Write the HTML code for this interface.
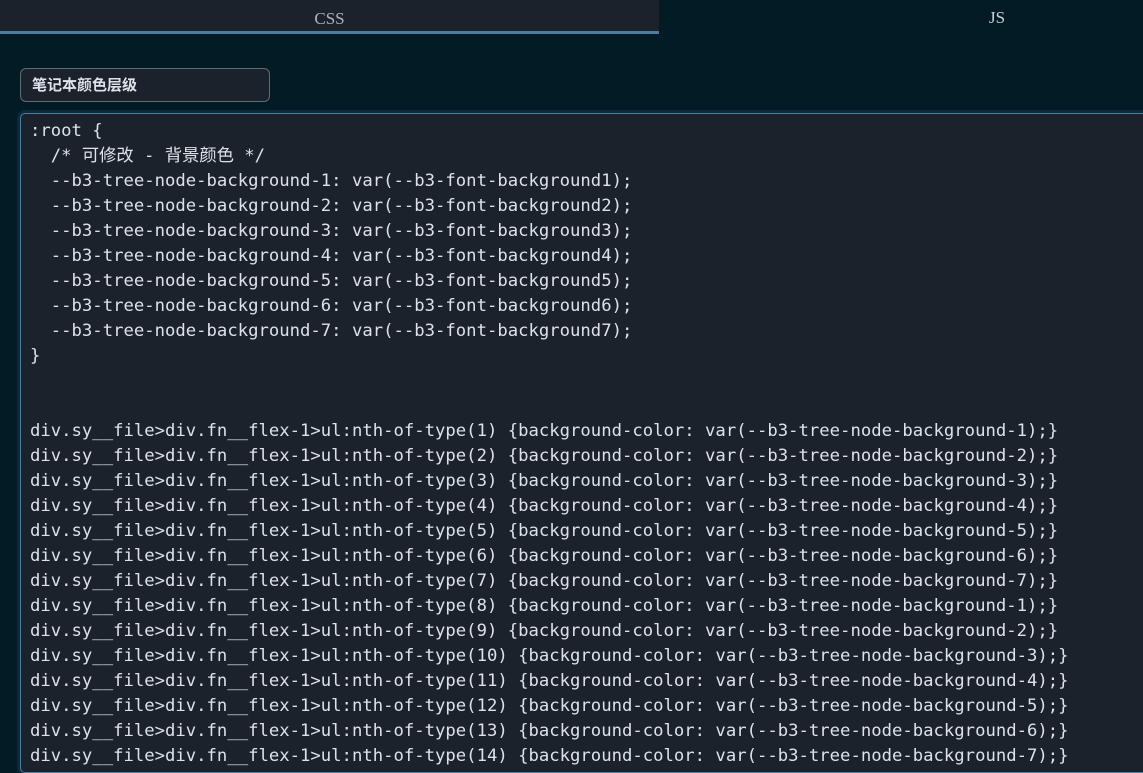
<!DOCTYPE html>
<html><head><meta charset="utf-8"><style>
html,body{margin:0;padding:0;width:1143px;height:764px;overflow:hidden;background:#021b24;}
.tabs{position:absolute;left:0;top:0;width:1143px;height:33px;}
.tab{position:absolute;top:0;height:31px;font-family:"Liberation Serif",serif;font-size:17px;color:#aab4bd;text-align:center;line-height:37px;}
.t1{left:0;width:655px;background:#1b222c;border-bottom:3px solid #4a7fa0;width:659px;}
.t2{left:957px;width:80px;color:#c8d0d8;line-height:36px;}
.title{position:absolute;left:20px;top:68px;width:250px;height:34px;border:1px solid #5d6b78;border-radius:6px;background:#1b222c;box-sizing:border-box;font-family:"Liberation Sans","Noto Sans CJK SC",sans-serif;font-weight:bold;font-size:15px;color:#dfe3e8;line-height:34px;padding-left:11px;}
.ed{position:absolute;left:20px;top:113px;width:1140px;height:660px;background:#1b222c;border:1px solid #4a7fa0;border-radius:5px;box-shadow:0 0 0 3px #0b2a3c;box-sizing:border-box;}
pre{margin:0;position:absolute;left:9px;top:5px;font-family:"DejaVu Sans Mono","Noto Sans CJK SC",monospace;font-size:17.25px;line-height:25px;color:#dde2e7;}
</style></head><body>
<div class="tabs"><div class="tab t1">CSS</div><div class="tab t2">JS</div></div>
<div class="title">笔记本颜色层级</div>
<div class="ed"><pre>:root {
  /* 可修改 - 背景颜色 */
  --b3-tree-node-background-1: var(--b3-font-background1);
  --b3-tree-node-background-2: var(--b3-font-background2);
  --b3-tree-node-background-3: var(--b3-font-background3);
  --b3-tree-node-background-4: var(--b3-font-background4);
  --b3-tree-node-background-5: var(--b3-font-background5);
  --b3-tree-node-background-6: var(--b3-font-background6);
  --b3-tree-node-background-7: var(--b3-font-background7);
}


div.sy__file>div.fn__flex-1>ul:nth-of-type(1) {background-color: var(--b3-tree-node-background-1);}
div.sy__file>div.fn__flex-1>ul:nth-of-type(2) {background-color: var(--b3-tree-node-background-2);}
div.sy__file>div.fn__flex-1>ul:nth-of-type(3) {background-color: var(--b3-tree-node-background-3);}
div.sy__file>div.fn__flex-1>ul:nth-of-type(4) {background-color: var(--b3-tree-node-background-4);}
div.sy__file>div.fn__flex-1>ul:nth-of-type(5) {background-color: var(--b3-tree-node-background-5);}
div.sy__file>div.fn__flex-1>ul:nth-of-type(6) {background-color: var(--b3-tree-node-background-6);}
div.sy__file>div.fn__flex-1>ul:nth-of-type(7) {background-color: var(--b3-tree-node-background-7);}
div.sy__file>div.fn__flex-1>ul:nth-of-type(8) {background-color: var(--b3-tree-node-background-1);}
div.sy__file>div.fn__flex-1>ul:nth-of-type(9) {background-color: var(--b3-tree-node-background-2);}
div.sy__file>div.fn__flex-1>ul:nth-of-type(10) {background-color: var(--b3-tree-node-background-3);}
div.sy__file>div.fn__flex-1>ul:nth-of-type(11) {background-color: var(--b3-tree-node-background-4);}
div.sy__file>div.fn__flex-1>ul:nth-of-type(12) {background-color: var(--b3-tree-node-background-5);}
div.sy__file>div.fn__flex-1>ul:nth-of-type(13) {background-color: var(--b3-tree-node-background-6);}
div.sy__file>div.fn__flex-1>ul:nth-of-type(14) {background-color: var(--b3-tree-node-background-7);}</pre></div>
</body></html>
